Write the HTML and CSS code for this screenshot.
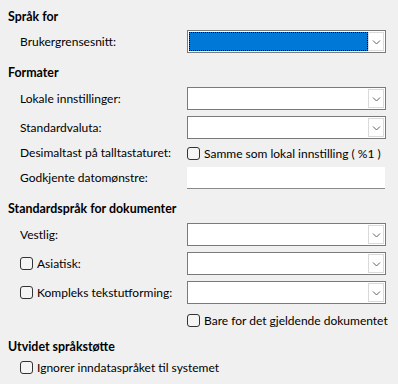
FILE: index.html
```html
<!DOCTYPE html>
<html lang="no">
<head>
<meta charset="utf-8">
<title>Språk</title>
<link rel="stylesheet" href="styles.css">
</head>
<body>
<div class="page">
  <section class="group group-first">
    <h2 class="group-title">Språk for</h2>
    <div class="fields">
      <span class="label">Brukergrensesnitt:</span>
      <div class="combo">
        <div class="combo-value combo-value-focused"></div>
        <div class="combo-button"><svg class="chevron" width="9" height="5" viewBox="0 0 9 5"><path d="M1 0.5 L4.5 4 L8 0.5" fill="none" stroke="#606060" stroke-width="1"/></svg></div>
      </div>
    </div>
  </section>

  <section class="group">
    <h2 class="group-title">Formater</h2>
    <div class="fields">
      <span class="label">Lokale innstillinger:</span>
      <div class="combo">
        <div class="combo-value"></div>
        <div class="combo-button"><svg class="chevron" width="9" height="5" viewBox="0 0 9 5"><path d="M1 0.5 L4.5 4 L8 0.5" fill="none" stroke="#606060" stroke-width="1"/></svg></div>
      </div>

      <span class="label">Standardvaluta:</span>
      <div class="combo">
        <div class="combo-value"></div>
        <div class="combo-button"><svg class="chevron" width="9" height="5" viewBox="0 0 9 5"><path d="M1 0.5 L4.5 4 L8 0.5" fill="none" stroke="#606060" stroke-width="1"/></svg></div>
      </div>

      <span class="label">Desimaltast på talltastaturet:</span>
      <label class="check"><span class="box"></span><span class="check-text">Samme som lokal innstilling ( %1 )</span></label>

      <span class="label">Godkjente datomønstre:</span>
      <div class="entry"></div>
    </div>
  </section>

  <section class="group">
    <h2 class="group-title">Standardspråk for dokumenter</h2>
    <div class="fields">
      <span class="label">Vestlig:</span>
      <div class="combo">
        <div class="combo-value"></div>
        <div class="combo-button"><svg class="chevron" width="9" height="5" viewBox="0 0 9 5"><path d="M1 0.5 L4.5 4 L8 0.5" fill="none" stroke="#606060" stroke-width="1"/></svg></div>
      </div>

      <label class="check"><span class="box"></span><span class="check-text">Asiatisk:</span></label>
      <div class="combo">
        <div class="combo-value"></div>
        <div class="combo-button"><svg class="chevron" width="9" height="5" viewBox="0 0 9 5"><path d="M1 0.5 L4.5 4 L8 0.5" fill="none" stroke="#606060" stroke-width="1"/></svg></div>
      </div>

      <label class="check"><span class="box"></span><span class="check-text">Kompleks tekstutforming:</span></label>
      <div class="combo">
        <div class="combo-value"></div>
        <div class="combo-button"><svg class="chevron" width="9" height="5" viewBox="0 0 9 5"><path d="M1 0.5 L4.5 4 L8 0.5" fill="none" stroke="#606060" stroke-width="1"/></svg></div>
      </div>

      <span class="label"></span>
      <label class="check check-spaced"><span class="box"></span><span class="check-text">Bare for det gjeldende dokumentet</span></label>
    </div>
  </section>

  <section class="group group-last">
    <h2 class="group-title">Utvidet språkstøtte</h2>
    <div class="single">
      <label class="check"><span class="box"></span><span class="check-text">Ignorer inndataspråket til systemet</span></label>
    </div>
  </section>
</div>
</body>
</html>
```

FILE: styles.css
```css
html, body {
  margin: 0;
  padding: 0;
  background: #f0f0f0;
}

body {
  font-family: Lato, "Noto Sans", sans-serif;
  font-size: 12px;
  color: #000;
}

.page {
  padding: 9px 12px 0 8px;
  width: 378px;
}

.group {
  margin-top: 12px;
}

.group-first {
  margin-top: 0;
}

.group-title {
  margin: 0;
  font-size: 12.4px;
  font-weight: bold;
  line-height: 16px;
  height: 16px;
}

.fields {
  display: grid;
  grid-template-columns: 167px 199px;
  row-gap: 6px;
  align-items: center;
  padding-left: 12px;
  margin-top: 6px;
}

.group-first .fields {
  margin-top: 5px;
}

.label {
  line-height: 16px;
  white-space: nowrap;
}

.combo {
  display: flex;
  height: 23px;
  box-sizing: border-box;
  border: 1px solid #7a7a7a;
  background: #fff;
}

.combo-value {
  flex: 1;
  margin: 1px 0 1px 1px;
}

.combo-value-focused {
  background: #0078d7;
  outline: 1px dotted #000;
  outline-offset: -1px;
}

.combo-button {
  width: 16px;
  box-sizing: border-box;
  border: 1px solid #dadada;
  margin: 1px 1px 1px 0;
  display: flex;
  align-items: center;
  justify-content: center;
  background: #fff;
}

.chevron {
  display: block;
  margin-top: 1px;
}

.entry {
  height: 22px;
  box-sizing: border-box;
  background: #fff;
  border-bottom: 1px solid #8a8a8a;
  margin-right: 1px;
}

.check {
  display: flex;
  align-items: center;
  height: 16px;
  white-space: nowrap;
}

.check-spaced {
  margin-top: 2px;
}

.box {
  width: 13px;
  height: 13px;
  box-sizing: border-box;
  border: 1px solid #333;
  border-radius: 3px;
  background: #f5f5f5;
  margin-right: 4px;
  flex: none;
}

.group-last {
  margin-top: 11px;
}

.single {
  padding-left: 12px;
  margin-top: 4px;
}
```
